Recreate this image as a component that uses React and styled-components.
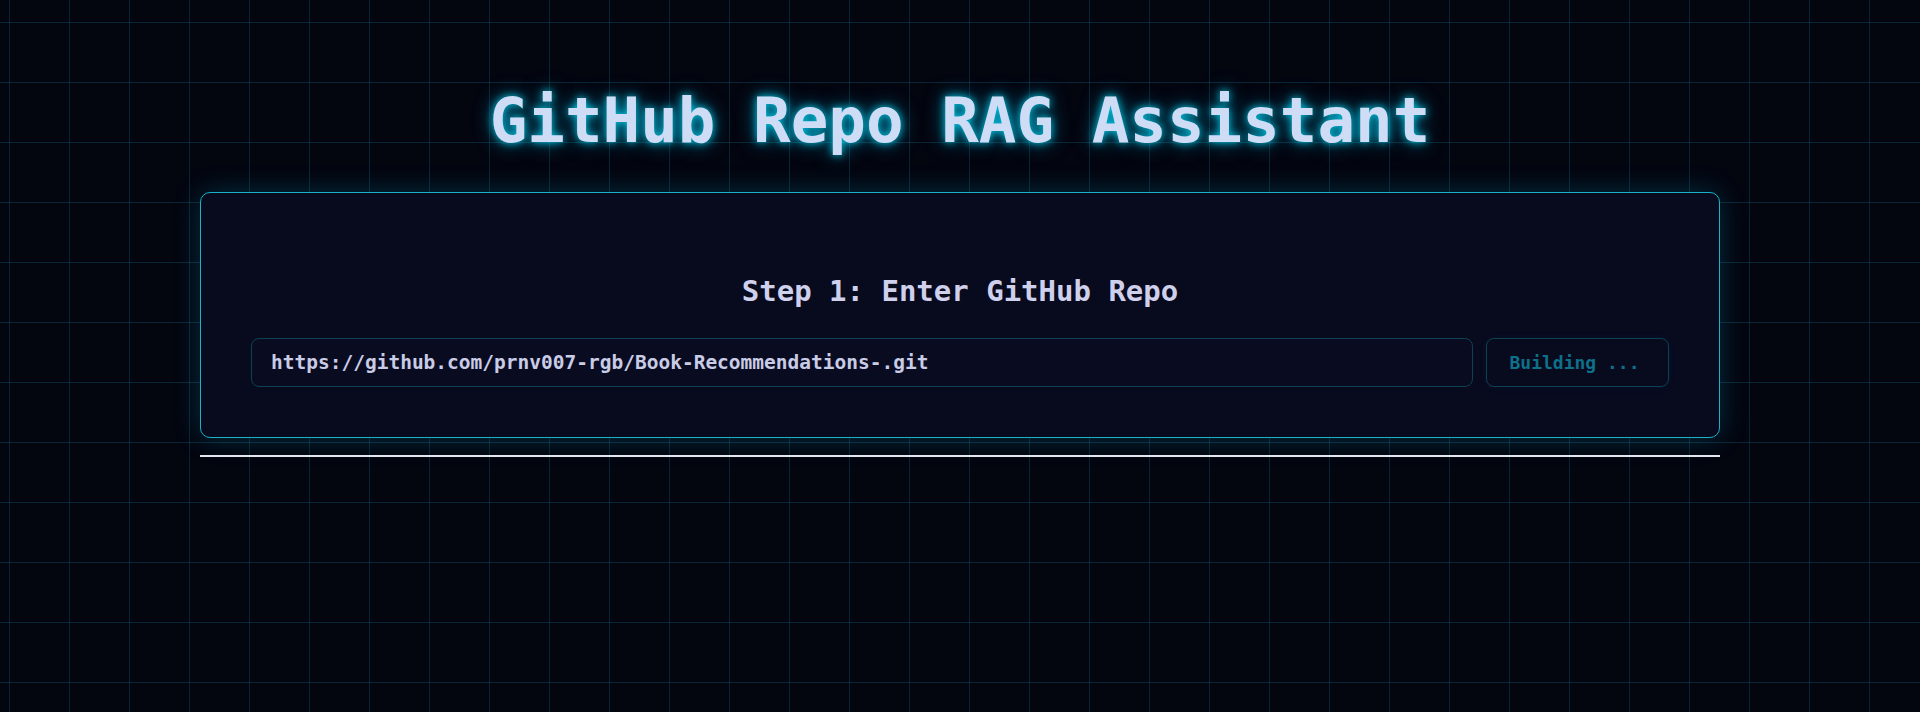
import React, { useState } from 'react';
import styled, { createGlobalStyle } from 'styled-components';

const GlobalStyle = createGlobalStyle`
    html, body {
        margin: 0;
        padding: 0;
        min-height: 100vh;
        background-color: #03050f;
        background-image:
            linear-gradient(to right, rgba(20, 110, 140, 0.3) 1px, transparent 1px),
            linear-gradient(to bottom, rgba(20, 110, 140, 0.3) 1px, transparent 1px);
        background-size: 60px 60px;
        background-position: 9px 22px;
        font-family: "DejaVu Sans Mono", "Liberation Mono", monospace;
    }

    * {
        box-sizing: border-box;
    }
`;

const Page = styled.div`
    min-height: 100vh;
    padding-top: 84px;
    display: flex;
    flex-direction: column;
    align-items: center;
`;

const Title = styled.h1`
    margin: 0 0 35px;
    font-size: 62.5px;
    font-weight: bold;
    color: #cfdcf6;
    text-shadow: 0 0 8px rgba(0, 225, 255, 0.9), 0 0 20px rgba(0, 200, 255, 0.55);
`;

const Main = styled.div`
    width: 1520px;
    display: flex;
    flex-direction: column;
`;

const Card = styled.section`
    background: #080a1e;
    border: 1px solid #1ab0c6;
    border-radius: 10px;
    padding: 50px;
    box-shadow: 0 0 28px rgba(0, 200, 240, 0.22);
`;

const StepTitle = styled.h2`
    margin: 31px 0 30px;
    text-align: center;
    font-size: 29px;
    font-weight: bold;
    color: #cfd0ec;
`;

const Row = styled.div`
    display: flex;
    gap: 13px;
`;

const RepoInput = styled.input`
    flex: 1;
    height: 49px;
    padding: 0 19px;
    background: #090b20;
    border: 1px solid #0f4154;
    border-radius: 8px;
    color: #c9cce6;
    font-family: inherit;
    font-size: 19.5px;
    font-weight: 600;
    outline: none;
`;

const BuildButton = styled.button`
    width: 183px;
    height: 49px;
    padding: 0 6px 0 0;
    background: #080a1e;
    border: 1px solid #0f4154;
    border-radius: 8px;
    color: #0e7089;
    font-family: inherit;
    font-size: 18px;
    font-weight: bold;
    box-shadow: 0 0 10px rgba(0, 180, 220, 0.06);
    cursor: not-allowed;
`;

const Divider = styled.hr`
    margin: 17px 0 0;
    border: none;
    height: 2px;
    background: #e4e6ee;
`;

export default function App() {
    const [repo, setRepo] = useState('https://github.com/prnv007-rgb/Book-Recommendations-.git');

    return (
        <>
            <GlobalStyle />
            <Page>
                <Title>GitHub Repo RAG Assistant</Title>
                <Main>
                    <Card>
                        <StepTitle>Step 1: Enter GitHub Repo</StepTitle>
                        <Row>
                            <RepoInput value={repo} onChange={(e) => setRepo(e.target.value)} />
                            <BuildButton disabled>Building ...</BuildButton>
                        </Row>
                    </Card>
                    <Divider />
                </Main>
            </Page>
        </>
    );
}
